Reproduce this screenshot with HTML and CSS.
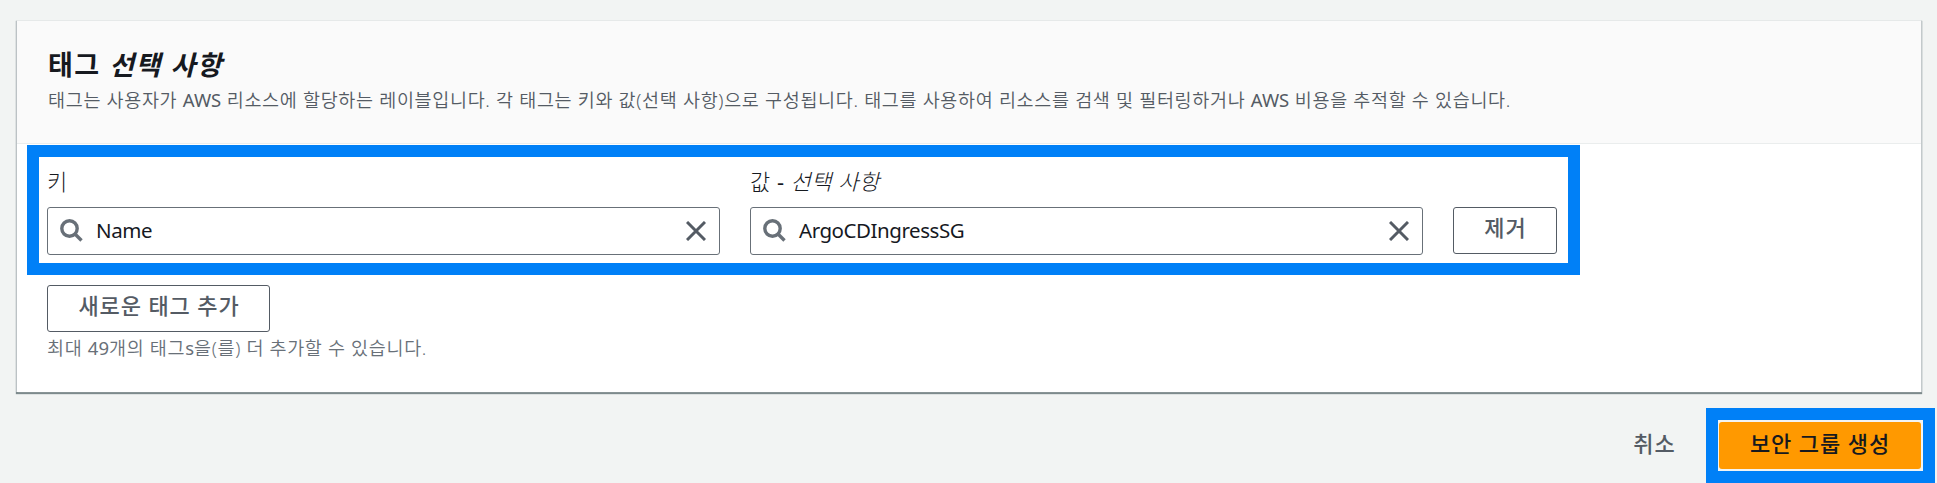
FILE: index.html
```html
<!DOCTYPE html>
<html lang="ko">
<head>
<meta charset="utf-8">
<title>보안 그룹 생성</title>
<link rel="stylesheet" href="styles.css">
</head>
<body>
<main class="page">
  <section class="card">
    <header class="card-header">
      <h2 class="title"><span>태그 </span><em>선택 사항</em></h2>
      <p class="description">태그는 사용자가 <span class="latin">AWS</span> 리소스에 할당하는 레이블입니다. 각 태그는 키와 값(선택 사항)으로 구성됩니다. 태그를 사용하여 리소스를 검색 및 필터링하거나 <span class="latin">AWS</span> 비용을 추적할 수 있습니다.</p>
    </header>
    <div class="card-body">
      <div class="tag-row">
        <div class="field">
          <div class="label"><span>키</span></div>
          <div class="input">
            <svg class="search" viewBox="0 0 24 24"><circle cx="9.5" cy="9.5" r="7.7"/><path d="M15 15 21.5 21.5"/></svg>
            <span class="value">Name</span>
            <svg class="clear" viewBox="0 0 20 20"><path d="M1 1 19 19M19 1 1 19"/></svg>
          </div>
        </div>
        <div class="field">
          <div class="label">값 <span class="latin">-</span> <em>선택 사항</em></div>
          <div class="input">
            <svg class="search" viewBox="0 0 24 24"><circle cx="9.5" cy="9.5" r="7.7"/><path d="M15 15 21.5 21.5"/></svg>
            <span class="value">ArgoCDIngressSG</span>
            <svg class="clear" viewBox="0 0 20 20"><path d="M1 1 19 19M19 1 1 19"/></svg>
          </div>
        </div>
        <button class="button remove">제거</button>
      </div>
      <button class="button add">새로운 태그 추가</button>
      <p class="hint">최대 <span class="latin">49</span>개의 태그<span class="latin">s</span>을(를) 더 추가할 수 있습니다.</p>
    </div>
  </section>
  <footer class="actions">
    <button class="cancel">취소</button>
    <div class="highlight"><button class="primary">보안 그룹 생성</button></div>
  </footer>
</main>
</body>
</html>
```

FILE: styles.css
```css
* { box-sizing: border-box; }
body {
  margin: 0;
  background: #f2f4f3;
  color: #16191f;
  font-family: "Noto Sans", "Noto Sans CJK KR", sans-serif;
}
.page { height: 483px; padding: 21px 16px 0 17px; overflow: hidden; }
h2, p { margin: 0; }
button { font-family: inherit; }
.card {
  height: 371px;
  background: #fff;
  box-shadow: 0 -1px 0 #e6e9e9, -1px 0 0 #bcc2c5, 1px 0 1px #c3c9cb, 0 1px 1px 1px #7d8a8c;
}
.card-header {
  height: 123px;
  padding: 26px 30px 0 31px;
  background: #fafafa;
  border-bottom: 1px solid #eaeded;
}
.title { font-size: 27px; line-height: 36px; font-weight: 700; letter-spacing: 1.5px; white-space: pre; }
.description {
  font-size: 18.5px;
  line-height: 33px;
  color: #545b64;
  font-weight: 350;
  white-space: nowrap;
  letter-spacing: 0.67px;
}
.latin { font-weight: 400; letter-spacing: 0; }
.card-body { padding: 1px 0 0 10px; }
.tag-row {
  display: flex;
  align-items: flex-start;
  gap: 30px;
  width: 1553px;
  height: 130px;
  padding: 9px 11px 0 8px;
  border: 12px solid #0080f7;
}
.field { width: 673px; }
.label { height: 41px; font-size: 22px; line-height: 30px; font-weight: 300; letter-spacing: 0.55px; }
.input {
  display: flex;
  align-items: center;
  height: 48px;
  padding: 0 13px 0 12px;
  border: 1px solid #687078;
  border-radius: 3px;
}
.search { width: 24px; height: 24px; fill: none; stroke: #687078; stroke-width: 3.4; }
.value { flex: 1; margin-left: 12px; padding-bottom: 2px; font-size: 20.5px; line-height: 30px; letter-spacing: -0.45px; }
.clear { width: 20px; height: 20px; fill: none; stroke: #545b64; stroke-width: 3; }
.button {
  display: block;
  height: 47px;
  padding: 0 0 7px 1px;
  border: 1px solid #545b64;
  border-radius: 3px;
  background: #fff;
  color: #545b64;
  font-size: 22px;
  line-height: 30px;
  font-weight: 500;
  letter-spacing: 0.9px;
}
.remove { width: 104px; margin-top: 41px; }
.add { width: 223px; margin: 10px 0 0 20px; }
.hint { padding-left: 20px; font-size: 18.5px; line-height: 32px; color: #687078; font-weight: 350; letter-spacing: 0.65px; }
.actions { display: flex; justify-content: flex-end; padding-top: 16px; margin-right: -14px; }
.cancel {
  width: 72px;
  height: 47px;
  margin: 14px 16px 0 0;
  padding: 0 0 8px 1px;
  border: 0;
  background: none;
  color: #545b64;
  font-size: 22px;
  font-weight: 500;
  letter-spacing: 0.9px;
}
.highlight { width: 229px; height: 75px; padding: 2px 2px 2px 1px; border: 12px solid #0080f7; background: #f2f4f3; }
.primary {
  display: block;
  width: 202px;
  height: 47px;
  padding: 0 0 8px 0;
  border: 0;
  border-radius: 3px;
  background: #ff9900;
  color: #16191f;
  font-size: 22px;
  font-weight: 500;
  letter-spacing: 0.9px;
}
```
